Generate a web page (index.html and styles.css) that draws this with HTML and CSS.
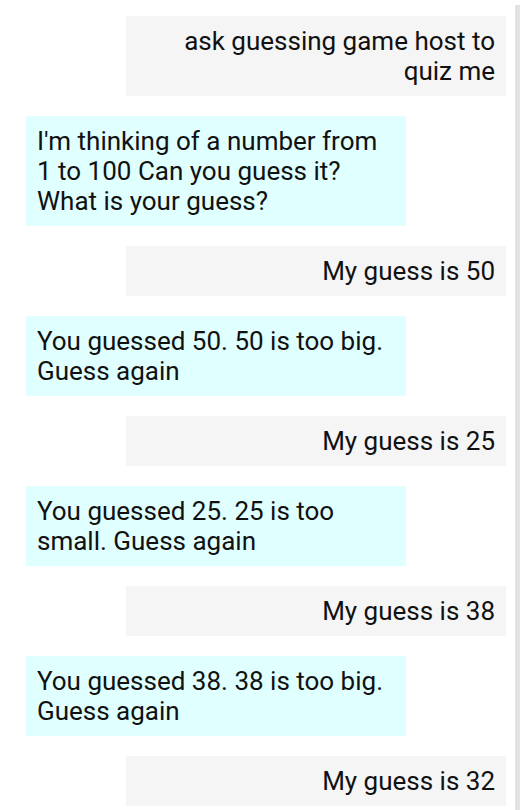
FILE: index.html
```html
<!DOCTYPE html>
<html>
<head>
<meta charset="utf-8">
<link rel="stylesheet" href="styles.css">
</head>
<body>
<div class="page">
  <div class="chat">
    <div class="msg user">ask guessing game host to quiz me</div>
    <div class="msg bot">I'm thinking of a number from 1 to 100 Can you guess it? What is your guess?</div>
    <div class="msg user">My guess is 50</div>
    <div class="msg bot">You guessed 50. 50 is too big. Guess again</div>
    <div class="msg user">My guess is 25</div>
    <div class="msg bot">You guessed 25. 25 is too small. Guess again</div>
    <div class="msg user">My guess is 38</div>
    <div class="msg bot">You guessed 38. 38 is too big. Guess again</div>
    <div class="msg user">My guess is 32</div>
  </div>
  <div class="rail"></div>
</div>
</body>
</html>
```

FILE: styles.css
```css
html, body {
  margin: 0;
  padding: 0;
  background: #ffffff;
  overflow: hidden;
}
.page {
  display: flex;
  height: 810px;
}
.chat {
  width: 480px;
  padding: 16px 0 0 26px;
  display: flex;
  flex-direction: column;
  gap: 20px;
  font-family: Roboto, "Liberation Sans", sans-serif;
  font-size: 26px;
  line-height: 30px;
  color: #111;
}
.msg {
  width: 380px;
  box-sizing: border-box;
  padding: 10px 11px;
}
.user {
  align-self: flex-end;
  background: #f5f5f5;
  text-align: right;
}
.bot {
  align-self: flex-start;
  background: #e0ffff;
  text-align: left;
}
.rail {
  margin: 5px 0 0 9px;
  width: 5px;
  background: repeating-linear-gradient(90deg, #e8e8e8 0 1px, #dcdcdc 1px 2px);
}
```
